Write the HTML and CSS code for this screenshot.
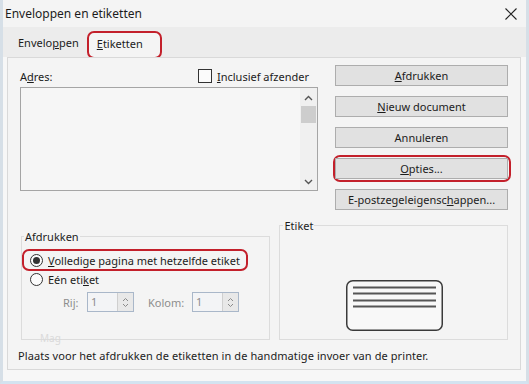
FILE: index.html
```html
<!DOCTYPE html>
<html>
<head>
  <title>Enveloppen en etiketten</title>
  <link rel="stylesheet" href="styles.css">
</head>
<body>
  <div class="window">
    <div class="titlebar">
      <span class="title">Enveloppen en etiketten</span>
      <svg class="close" width="12" height="12" viewBox="0 0 12 12">
        <path d="M0.5 0.5 L11.5 11.5 M11.5 0.5 L0.5 11.5" stroke="#222" stroke-width="1.1" fill="none"/>
      </svg>
    </div>

    <div class="tabstrip">
      <div class="tab">Envelo<u>p</u>pen</div>
      <div class="tab active"><u>E</u>tiketten</div>
    </div>

    <div class="panel">
      <div class="top">
        <div class="address">
          <div class="address-head">
            <span>A<u>d</u>res:</span>
            <span class="check"><span class="box"></span><span><u>I</u>nclusief afzender</span></span>
          </div>
          <div class="textarea">
            <div class="scrollbar">
              <svg width="9" height="6" viewBox="0 0 9 6"><path d="M1 5 L4.5 1.5 L8 5" stroke="#555" stroke-width="1.4" fill="none"/></svg>
              <div class="thumb"></div>
              <div class="track"></div>
              <svg width="9" height="6" viewBox="0 0 9 6"><path d="M1 1 L4.5 4.5 L8 1" stroke="#555" stroke-width="1.4" fill="none"/></svg>
            </div>
          </div>
        </div>

        <div class="buttons">
          <div class="btn"><u>A</u>fdrukken</div>
          <div class="btn"><u>N</u>ieuw document</div>
          <div class="btn">Annuleren</div>
          <div class="btn-mark">
            <div class="btn"><u>O</u>pties...</div>
          </div>
          <div class="btn">E-postzegeleigensc<u>h</u>appen...</div>
        </div>
      </div>

      <div class="bottom">
        <fieldset class="group print">
          <legend>Afdrukken</legend>
          <div class="radio-row marked">
            <span class="radio on"></span><span><u>V</u>olledige pagina met hetzelfde etiket</span>
          </div>
          <div class="radio-row">
            <span class="radio"></span><span>Eén eti<u>k</u>et</span>
          </div>
          <div class="spin-row">
            <span class="spin-label rij">Rij:</span>
            <span class="spinbox"><span class="value">1</span><span class="arrows">
              <svg width="7" height="11" viewBox="0 0 7 11"><path d="M1 4 L3.5 1.5 L6 4" stroke="#8a8a8a" stroke-width="1" fill="none"/><path d="M1 7 L3.5 9.5 L6 7" stroke="#8a8a8a" stroke-width="1" fill="none"/></svg>
            </span></span>
            <span class="spin-label kolom">Kolom:</span>
            <span class="spinbox"><span class="value">1</span><span class="arrows">
              <svg width="7" height="11" viewBox="0 0 7 11"><path d="M1 4 L3.5 1.5 L6 4" stroke="#8a8a8a" stroke-width="1" fill="none"/><path d="M1 7 L3.5 9.5 L6 7" stroke="#8a8a8a" stroke-width="1" fill="none"/></svg>
            </span></span>
          </div>
          <span class="ghost">Mag</span>
        </fieldset>

        <fieldset class="group label">
          <legend>Etiket</legend>
          <svg class="label-icon" width="97" height="51" viewBox="0 0 97 51">
            <rect x="0.75" y="0.75" width="95.5" height="49.5" rx="6" fill="#f8f8f8" stroke="#3a3a3a" stroke-width="1.5"/>
            <path d="M7 7.5 H90 M7 13.5 H90 M7 20.5 H90 M7 26.5 H90" stroke="#555" stroke-width="2"/>
          </svg>
        </fieldset>
      </div>

      <p class="note">Plaats voor het afdrukken de etiketten in de handmatige invoer van de printer.</p>
    </div>
  </div>
</body>
</html>
```

FILE: styles.css
```css
* {
  box-sizing: border-box;
}
body {
  margin: 0;
  font-family: "Noto Sans", "Open Sans", sans-serif;
  font-size: 11px;
  color: #1c1c1c;
}
u {
  text-decoration-thickness: 1px;
  text-underline-offset: 1px;
}
.window {
  width: 529px;
  height: 384px;
  background: #f7f7f7;
  border-left: 3px solid #d6dfe7;
  border-right: 3px solid #d6dfe7;
  border-bottom: 3px solid #d3e3f0;
  display: flex;
  flex-direction: column;
}
.titlebar {
  height: 27px;
  background: #f4f4f4;
  display: flex;
  align-items: center;
  justify-content: space-between;
  padding: 0 9px 0 2px;
}
.title {
  font-size: 12px;
}
.tabstrip {
  height: 30px;
  background: #ececec;
  display: flex;
  align-items: flex-end;
  padding-left: 7px;
}
.tab {
  height: 24px;
  line-height: 20px;
  padding: 0 8px;
}
.tab.active {
  height: 28px;
  line-height: 22px;
  width: 75px;
  margin-bottom: -2px;
  padding: 0 8px;
  background: #f4f4f4;
  border: 2px solid #c3202b;
  border-radius: 7px;
}
.panel {
  height: 313px;
  margin: 0 5px 0 4px;
  border: 1px solid #d9d9d9;
  background: #f4f4f4;
  padding: 7px 12px 0 12px;
}
.top {
  display: flex;
  gap: 17px;
}
.address {
  width: 298px;
}
.address-head {
  height: 22px;
  display: flex;
  align-items: center;
  justify-content: space-between;
  padding-right: 9px;
}
.check {
  display: flex;
  align-items: center;
  gap: 5px;
}
.box {
  width: 14px;
  height: 14px;
  border: 1px solid #333;
  background: #fbfbfb;
}
.textarea {
  height: 104px;
  border: 1px solid #a5a5a5;
  background: #f6f6f6;
  display: flex;
  justify-content: flex-end;
}
.scrollbar {
  width: 17px;
  background: #f0f0f0;
  display: flex;
  flex-direction: column;
  align-items: center;
  padding: 7px 0 5px;
}
.thumb {
  width: 15px;
  height: 17px;
  margin-top: 5px;
  background: #cdcdcd;
}
.track {
  flex: 1;
}
.buttons {
  width: 173px;
  display: flex;
  flex-direction: column;
  gap: 10px;
}
.btn {
  height: 21px;
  line-height: 19px;
  text-align: center;
  background: #e1e1e1;
  border: 1px solid #adadad;
}
.btn-mark {
  margin: -3px -3px -3px -2px;
  padding: 1px 1px 1px 0;
  border: 2px solid #c3202b;
  border-radius: 7px;
}
.bottom {
  display: flex;
  align-items: flex-end;
  gap: 9px;
  margin-top: 8px;
}
.group {
  margin: 0;
  padding: 0;
  border: 1px solid #dcdcdc;
  position: relative;
}
.group legend {
  padding: 0 1px;
  line-height: 15px;
}
.print {
  width: 250px;
  height: 111px;
  margin-left: 1px;
}
.print legend {
  margin-left: 2px;
}
.label {
  width: 229px;
  height: 122px;
  display: flex;
  flex-direction: column;
  align-items: center;
  justify-content: flex-end;
  padding-bottom: 8px;
}
.label legend {
  margin-left: 3px;
}
.label-icon {
  display: block;
  margin-left: 2px;
}
.radio-row {
  display: flex;
  align-items: center;
  gap: 5px;
  height: 17px;
  padding-left: 8px;
}
.radio-row.marked {
  height: 22px;
  width: 226px;
  margin-top: 5px;
  padding-left: 6px;
  border: 2px solid #c3202b;
  border-radius: 7px;
}
.radio {
  width: 13px;
  height: 13px;
  border: 1px solid #333;
  border-radius: 50%;
  background: #fbfbfb;
  display: flex;
  align-items: center;
  justify-content: center;
}
.radio.on::after {
  content: "";
  width: 7px;
  height: 7px;
  border-radius: 50%;
  background: #333;
}
.spin-row {
  display: flex;
  align-items: center;
  height: 20px;
  margin-top: 4px;
  padding-left: 41px;
  color: #8d8d8d;
}
.spin-label.rij {
  width: 24px;
}
.spin-label.kolom {
  width: 44px;
  margin-left: 14px;
}
.spinbox {
  display: flex;
  height: 20px;
  width: 47px;
  border: 1px solid #a9b7c9;
  background: #f3f4f6;
}
.value {
  flex: 1;
  padding-left: 3px;
  line-height: 18px;
}
.arrows {
  width: 16px;
  background: #e8e8e8;
  border-left: 1px solid #cfcfcf;
  display: flex;
  align-items: center;
  justify-content: center;
}
.ghost {
  position: absolute;
  left: 18px;
  bottom: -6px;
  color: #dadada;
  font-size: 10px;
}
.note {
  margin: 8px 0 0 -2px;
  line-height: 16px;
  letter-spacing: 0.08px;
}
```
